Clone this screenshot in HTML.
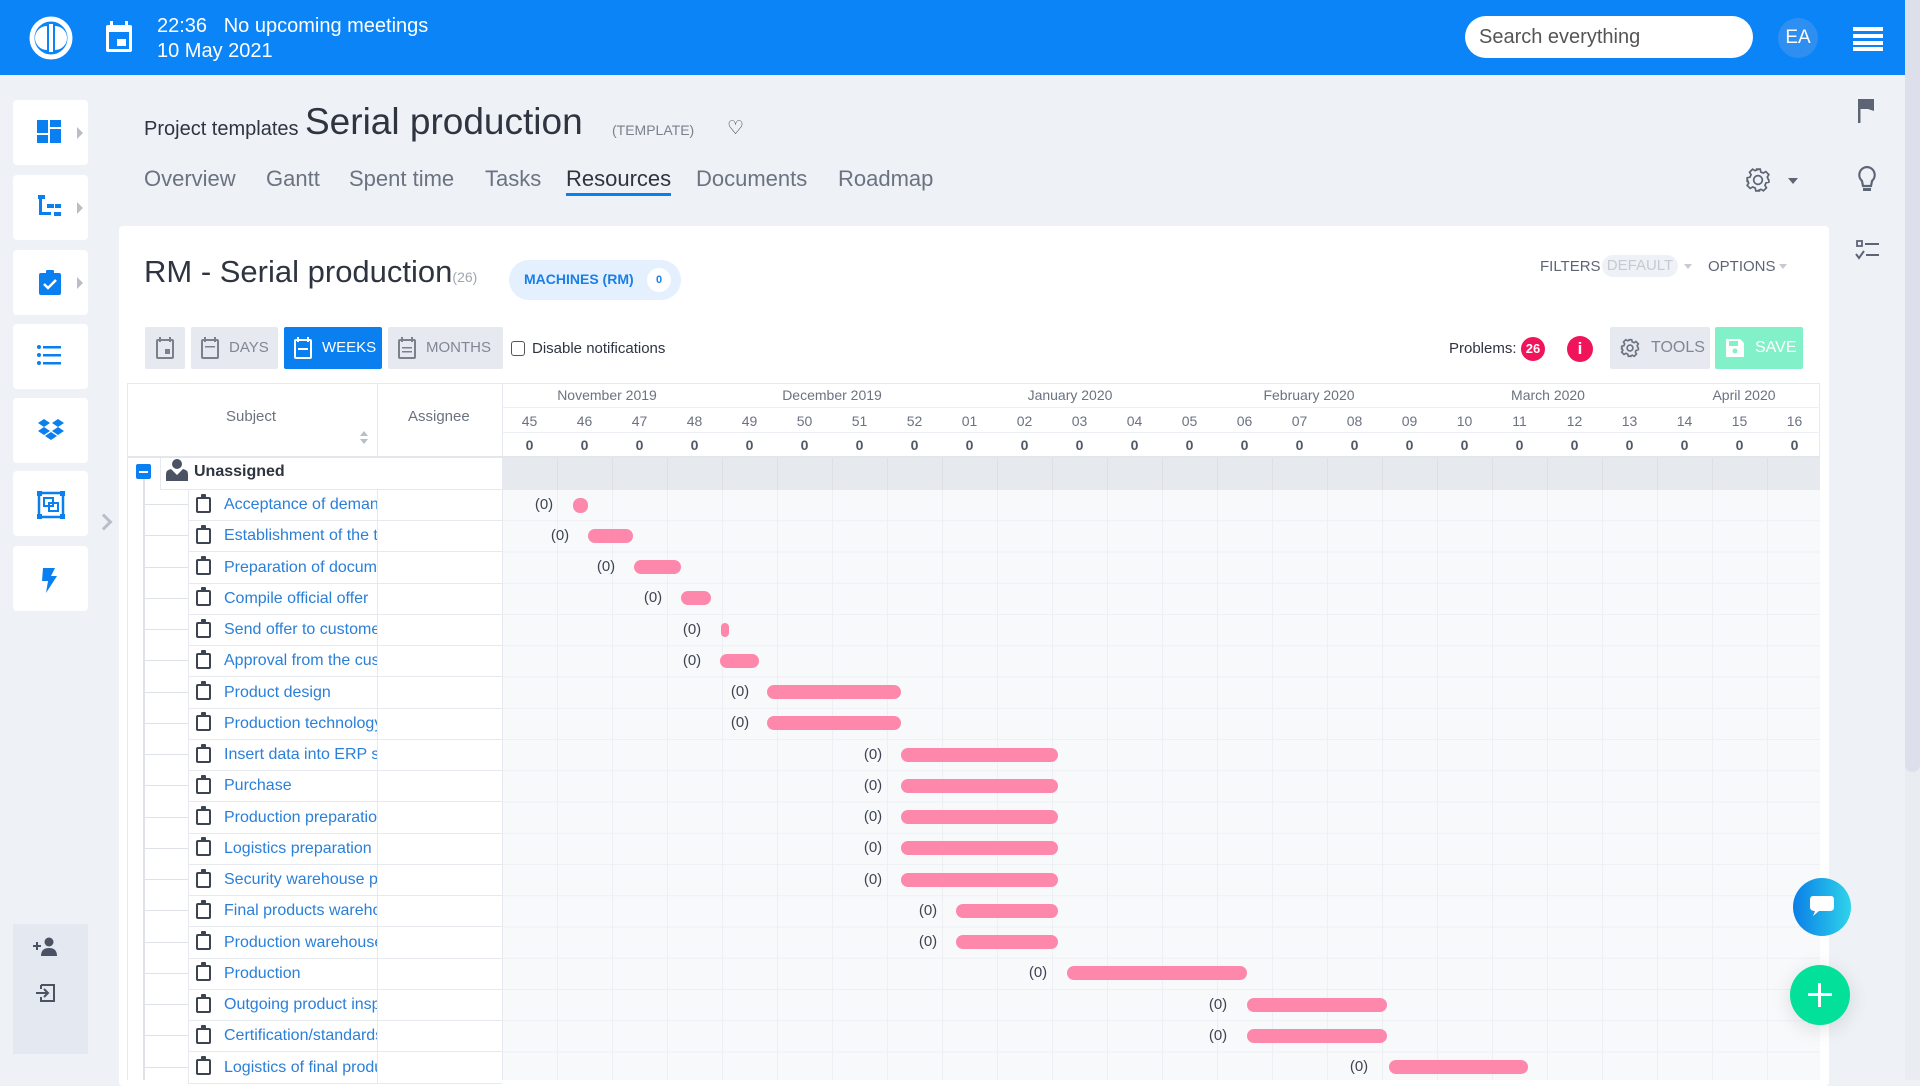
<!DOCTYPE html>
<html><head><meta charset="utf-8"><style>
*{box-sizing:border-box;margin:0;padding:0}
body{width:1920px;height:1080px;overflow:hidden;background:#eef2f6;font-family:"Liberation Sans",sans-serif;position:relative;color:#3d4451}
.a{position:absolute}
.hdr{left:0;top:0;width:1905px;height:75px;background:#0a84f7}
.tile{left:13px;width:75px;height:65px;background:#fff;border-radius:4px}
.tile svg{position:absolute;left:24px;top:20px}
.car{position:absolute;left:64px;top:27px;width:0;height:0;border-top:6px solid transparent;border-bottom:6px solid transparent;border-left:6px solid #b9bec8}
.tab{top:166px;font-size:22px;color:#6b7280}
.btn{top:327px;height:42px;background:#e6e9f0;color:#808794;font-size:15px;line-height:42px;border-radius:2px}
.row{left:127px;width:1693px;height:31px}
.tt{left:224px;font-size:16px;color:#2a7fd8;white-space:nowrap;overflow:hidden;width:153px;line-height:31px}
.ic{left:196px;width:15px;height:16px;border:2px solid #3d4451;border-radius:2px}
.ic:after{content:"";position:absolute;left:3px;top:-5px;width:5px;height:4px;background:#3d4451;border-radius:1px}
.bar{height:14px;background:#fd88ab;border-radius:7px}
.lb{font-size:15px;color:#3d4451;width:40px;text-align:center}
.wk{top:413px;width:55px;text-align:center;font-size:14px;color:#6b7280}
.z{top:437px;width:55px;text-align:center;font-size:14px;color:#505866;font-weight:bold}
.mo{top:387px;font-size:14px;color:#6b7280;text-align:center;width:160px}
</style></head><body>
<div class="a hdr"></div>
<svg class="a" style="left:28px;top:15px" width="46" height="46" viewBox="0 0 46 46"><circle cx="23" cy="23" r="19" fill="none" stroke="#fff" stroke-width="5"/><path d="M19 11 A12 12 0 0 0 19 35 Z" fill="#fff"/><rect x="21" y="9" width="4" height="28" fill="#fff"/><path d="M27 11 A12 12 0 0 1 27 35 Z" fill="#fff"/></svg>
<svg class="a" style="left:104px;top:20px" width="30" height="34" viewBox="0 0 30 34"><rect x="2" y="5" width="26" height="27" rx="2" fill="#fff"/><rect x="6" y="1" width="3" height="7" fill="#fff"/><rect x="21" y="1" width="3" height="7" fill="#fff"/><rect x="5" y="12" width="20" height="17" fill="#0a84f7"/><rect x="13" y="19" width="9" height="7" fill="#fff"/></svg>
<div class="a" style="left:157px;top:14px;color:#fff;font-size:20px;line-height:25px">22:36&nbsp;&nbsp; No upcoming meetings<br>10 May 2021</div>
<div class="a" style="left:1465px;top:16px;width:288px;height:42px;background:#fff;border-radius:21px;font-size:20px;color:#555;line-height:42px;padding-left:14px">Search everything</div>
<div class="a" style="left:1778px;top:18px;width:40px;height:40px;border-radius:50%;background:#2f8ff0;color:#fff;font-size:19px;line-height:40px;text-align:center">EA</div>
<div class="a" style="left:1853px;top:27px;width:30px;height:4px;background:#fff;box-shadow:0 7px 0 #fff,0 14px 0 #fff,0 20px 0 #fff"></div>
<div class="a" style="left:1905px;top:75px;width:15px;height:1005px;background:#e9edf2"></div>
<div class="a" style="left:1905px;top:0;width:15px;height:772px;background:#dde0ea;border-radius:0 0 7px 7px"></div>

<!-- left tiles -->
<div class="a tile" style="top:100px"><svg width="26" height="24"><rect x="0" y="0" width="11" height="13" fill="#0a7ff0"/><rect x="13" y="0" width="11" height="7" fill="#0a7ff0"/><rect x="0" y="15" width="11" height="8" fill="#0a7ff0"/><rect x="13" y="9" width="11" height="14" fill="#0a7ff0"/></svg><div class="car"></div></div>
<div class="a tile" style="top:175px"><svg width="26" height="24"><rect x="1" y="0" width="7" height="4" fill="#0a7ff0"/><rect x="2" y="4" width="3" height="16" fill="#0a7ff0"/><rect x="2" y="17" width="12" height="3" fill="#0a7ff0"/><rect x="10" y="9" width="7" height="4" fill="#0a7ff0"/><rect x="18" y="9" width="6" height="4" fill="#0a7ff0"/><rect x="17" y="17" width="7" height="4" fill="#0a7ff0"/></svg><div class="car"></div></div>
<div class="a tile" style="top:250px"><svg width="26" height="26"><rect x="2" y="3" width="22" height="22" rx="2" fill="#0a7ff0"/><rect x="9" y="0" width="8" height="5" rx="1" fill="#0a7ff0"/><path d="M7 14 L11 18 L19 10" stroke="#fff" stroke-width="2.5" fill="none"/></svg><div class="car"></div></div>
<div class="a tile" style="top:324px"><svg width="26" height="24"><circle cx="2" cy="3" r="2" fill="#0a7ff0"/><circle cx="2" cy="11" r="2" fill="#0a7ff0"/><circle cx="2" cy="19" r="2" fill="#0a7ff0"/><rect x="6" y="2" width="18" height="2.5" fill="#0a7ff0"/><rect x="6" y="10" width="18" height="2.5" fill="#0a7ff0"/><rect x="6" y="18" width="18" height="2.5" fill="#0a7ff0"/></svg></div>
<div class="a tile" style="top:398px"><svg width="28" height="24"><path d="M7 1 L13 5 L7 9 L1 5Z M21 1 L27 5 L21 9 L15 5Z M7 9 L13 13 L7 17 L1 13Z M21 9 L27 13 L21 17 L15 13Z M14 14 L20 18 L14 22 L8 18Z" fill="#0a7ff0"/></svg></div>
<div class="a tile" style="top:471px"><svg width="28" height="28"><rect x="2" y="2" width="24" height="24" fill="none" stroke="#0a7ff0" stroke-width="2.5"/><rect x="0" y="0" width="5" height="5" fill="#0a7ff0"/><rect x="23" y="0" width="5" height="5" fill="#0a7ff0"/><rect x="0" y="23" width="5" height="5" fill="#0a7ff0"/><rect x="23" y="23" width="5" height="5" fill="#0a7ff0"/><rect x="7" y="7" width="9" height="8" fill="none" stroke="#0a7ff0" stroke-width="2"/><rect x="12" y="12" width="9" height="8" fill="none" stroke="#0a7ff0" stroke-width="2"/></svg></div>
<div class="a tile" style="top:546px"><svg width="26" height="28"><path d="M6 2 L18 2 L14 10 L20 10 L9 27 L11 15 L5 15 Z" fill="#0a7ff0"/></svg></div>
<div class="a" style="left:98px;top:516px;width:12px;height:12px;border-right:3px solid #b9bec8;border-top:3px solid #b9bec8;transform:rotate(45deg)"></div>
<div class="a" style="left:13px;top:924px;width:75px;height:130px;background:#e4e8f0"></div>
<svg class="a" style="left:33px;top:937px" width="26" height="20"><rect x="0" y="8" width="8" height="2" fill="#4a5263"/><rect x="3" y="5" width="2" height="8" fill="#4a5263"/><circle cx="16" cy="5" r="4.5" fill="#4a5263"/><path d="M8 19 Q8 11 16 11 Q24 11 24 19Z" fill="#4a5263"/></svg>
<svg class="a" style="left:35px;top:983px" width="22" height="20"><path d="M6 2 H19 V18 H6 V14 M6 6 V2" stroke="#4a5263" stroke-width="2" fill="none"/><path d="M1 10 H13 M9 6 L13 10 L9 14" stroke="#4a5263" stroke-width="2" fill="none"/></svg>

<!-- right icons -->
<svg class="a" style="left:1857px;top:98px" width="20" height="26"><rect x="1" y="1" width="2.5" height="24" fill="#5d6575"/><path d="M3 1 H17 V13 L11 11 H3Z" fill="#5d6575"/></svg>
<svg class="a" style="left:1857px;top:165px" width="20" height="30"><path d="M10 2 A8 8 0 0 1 15 16 L14 21 H6 L5 16 A8 8 0 0 1 10 2Z" fill="none" stroke="#5d6575" stroke-width="2.2"/><rect x="6" y="23" width="8" height="3" fill="#5d6575"/></svg>
<svg class="a" style="left:1855px;top:240px" width="26" height="22"><rect x="2" y="1" width="5" height="5" fill="none" stroke="#5d6575" stroke-width="1.8"/><rect x="10" y="3" width="14" height="2" fill="#5d6575"/><path d="M1 14 L4 18 L9 11" stroke="#5d6575" stroke-width="2" fill="none"/><rect x="11" y="14" width="13" height="2" fill="#5d6575"/></svg>

<!-- page title -->
<div class="a" style="left:144px;top:118px;font-size:20px;color:#2e3440">Project templates</div>
<div class="a" style="left:305px;top:101px;font-size:37px;color:#2e3440">Serial production</div>
<div class="a" style="left:612px;top:122px;font-size:14px;color:#7a808c">(TEMPLATE)</div>
<div class="a" style="left:727px;top:117px;font-size:19px;color:#2e3440">♡</div>
<div class="a tab" style="left:144px">Overview</div>
<div class="a tab" style="left:266px">Gantt</div>
<div class="a tab" style="left:349px">Spent time</div>
<div class="a tab" style="left:485px">Tasks</div>
<div class="a tab" style="left:566px;color:#2e3440">Resources</div>
<div class="a" style="left:566px;top:193px;width:105px;height:3px;background:#0a7ff0"></div>
<div class="a tab" style="left:696px">Documents</div>
<div class="a tab" style="left:838px">Roadmap</div>
<svg class="a" style="left:1745px;top:167px" width="26" height="26" viewBox="0 0 24 24"><path d="M12 8a4 4 0 1 0 0 8a4 4 0 1 0 0-8z M10 2h4l.6 2.6 2.3 1 2.3-1.4 2.8 2.8-1.4 2.3 1 2.3L22 12v0l0 2-2.6.6-1 2.3 1.4 2.3-2.8 2.8-2.3-1.4-2.3 1L14 22h-4l-.6-2.6-2.3-1-2.3 1.4-2.8-2.8 1.4-2.3-1-2.3L2 14v-4l2.6-.6 1-2.3-1.4-2.3 2.8-2.8 2.3 1.4 2.3-1z" fill="none" stroke="#5d6575" stroke-width="1.6"/></svg>
<div class="a" style="left:1788px;top:178px;border-left:5px solid transparent;border-right:5px solid transparent;border-top:6px solid #5d6575"></div>

<!-- main panel -->
<div class="a" style="left:119px;top:226px;width:1710px;height:860px;background:#fff;border-radius:4px"></div>
<div class="a" style="left:144px;top:254px;font-size:31px;color:#2e3440">RM - Serial production<span style="font-size:14px;color:#a0a6b0">(26)</span></div>
<div class="a" style="left:509px;top:260px;width:172px;height:40px;border-radius:20px;background:#e4f0fd"></div>
<div class="a" style="left:524px;top:271px;font-size:14px;font-weight:bold;color:#1a7fe8">MACHINES (RM)</div>
<div class="a" style="left:647px;top:268px;width:24px;height:24px;border-radius:12px;background:#fff;font-size:11px;font-weight:bold;color:#1a7fe8;text-align:center;line-height:24px">0</div>
<div class="a" style="left:1540px;top:258px;font-size:15px;color:#5d6575">FILTERS</div>
<div class="a" style="left:1602px;top:255px;width:76px;height:22px;border-radius:11px;background:#eef2f6;font-size:15px;color:#c5cad3;text-align:center;line-height:22px">DEFAULT</div>
<div class="a" style="left:1684px;top:264px;border-left:4px solid transparent;border-right:4px solid transparent;border-top:5px solid #c5cad3"></div>
<div class="a" style="left:1708px;top:258px;font-size:15px;color:#5d6575">OPTIONS</div>
<div class="a" style="left:1779px;top:264px;border-left:4px solid transparent;border-right:4px solid transparent;border-top:5px solid #c5cad3"></div>

<div class="a btn" style="left:145px;width:40px"></div>
<svg class="a" style="left:156px;top:337px" width="18" height="22"><rect x="1" y="3" width="16" height="18" rx="1" fill="none" stroke="#7a808c" stroke-width="2"/><rect x="3" y="0" width="2" height="5" fill="#7a808c"/><rect x="13" y="0" width="2" height="5" fill="#7a808c"/><rect x="9" y="12" width="5" height="5" fill="#7a808c"/></svg>
<div class="a btn" style="left:191px;width:87px;padding-left:38px">DAYS</div>
<svg class="a" style="left:201px;top:337px" width="18" height="22"><rect x="1" y="3" width="16" height="18" rx="1" fill="none" stroke="#7a808c" stroke-width="2"/><rect x="3" y="0" width="2" height="5" fill="#7a808c"/><rect x="13" y="0" width="2" height="5" fill="#7a808c"/><rect x="4" y="9" width="10" height="1.5" fill="#7a808c"/></svg>
<div class="a btn" style="left:284px;width:98px;background:#0a7ff0;color:#fff;padding-left:38px">WEEKS</div>
<svg class="a" style="left:294px;top:337px" width="18" height="22"><rect x="1" y="3" width="16" height="18" rx="1" fill="none" stroke="#fff" stroke-width="2"/><rect x="3" y="0" width="2" height="5" fill="#fff"/><rect x="13" y="0" width="2" height="5" fill="#fff"/><rect x="4" y="11" width="10" height="2" fill="#fff"/></svg>
<div class="a btn" style="left:388px;width:115px;padding-left:38px">MONTHS</div>
<svg class="a" style="left:398px;top:337px" width="18" height="22"><rect x="1" y="3" width="16" height="18" rx="1" fill="none" stroke="#7a808c" stroke-width="2"/><rect x="3" y="0" width="2" height="5" fill="#7a808c"/><rect x="13" y="0" width="2" height="5" fill="#7a808c"/><rect x="4" y="10" width="10" height="1.5" fill="#7a808c"/><rect x="4" y="14" width="10" height="1.5" fill="#7a808c"/></svg>
<div class="a" style="left:511px;top:341px;width:14px;height:15px;border:1.5px solid #555;border-radius:3px"></div>
<div class="a" style="left:532px;top:340px;font-size:15px;color:#2e3440">Disable notifications</div>
<div class="a" style="left:1449px;top:340px;font-size:15px;color:#2e3440">Problems:</div>
<div class="a" style="left:1521px;top:337px;width:24px;height:24px;border-radius:12px;background:#f0145a;color:#fff;font-size:13px;font-weight:bold;text-align:center;line-height:24px">26</div>
<div class="a" style="left:1567px;top:336px;width:26px;height:26px;border-radius:13px;background:#f0145a;color:#fff;font-size:17px;font-weight:bold;text-align:center;line-height:26px">i</div>
<div class="a btn" style="left:1610px;width:100px;padding-left:41px;font-size:16px">TOOLS</div>
<svg class="a" style="left:1620px;top:338px" width="20" height="20" viewBox="0 0 24 24"><circle cx="12" cy="12" r="3.5" fill="none" stroke="#6b7280" stroke-width="2"/><path d="M10 2h4l.6 2.6 2.3 1 2.3-1.4 2.8 2.8-1.4 2.3 1 2.3L22 12l0 2-2.6.6-1 2.3 1.4 2.3-2.8 2.8-2.3-1.4-2.3 1L14 22h-4l-.6-2.6-2.3-1-2.3 1.4-2.8-2.8 1.4-2.3-1-2.3L2 14v-4l2.6-.6 1-2.3-1.4-2.3 2.8-2.8 2.3 1.4 2.3-1z" fill="none" stroke="#6b7280" stroke-width="2"/></svg>
<div class="a btn" style="left:1715px;width:88px;background:#82f0c9;color:#fff;padding-left:40px;font-size:16px">SAVE</div>
<svg class="a" style="left:1725px;top:338px" width="20" height="20"><path d="M1 1 H15 L19 5 V19 H1Z" fill="#fff"/><rect x="4" y="3" width="9" height="5" fill="#82f0c9"/><circle cx="10" cy="13" r="2.5" fill="#82f0c9"/></svg>

<!-- table -->
<div class="a" style="left:127px;top:383px;width:1693px;height:697px;border:1px solid #e6e9ee;border-bottom:none"></div>
<div class="a" style="left:502px;top:489px;width:1318px;height:591px;background-color:#f8f9fb;background-image:linear-gradient(90deg,#eceff3 1px,transparent 1px),linear-gradient(180deg,#eef0f4 1px,transparent 1px);background-size:55px 100%,100% 31.25px"></div>
<div class="a" style="left:502px;top:458px;width:1318px;height:32px;background-color:#e6e9ee;background-image:linear-gradient(90deg,#dde1e7 1px,transparent 1px);background-size:55px 100%"></div>
<div class="a" style="left:377px;top:383px;width:1px;height:75px;background:#e6e9ee"></div>
<div class="a" style="left:502px;top:383px;width:1px;height:697px;background:#e6e9ee"></div>
<div class="a" style="left:502px;top:407px;width:1318px;height:1px;background:#eceff3"></div>
<div class="a" style="left:502px;top:432px;width:1318px;height:1px;background:#eceff3"></div>
<div class="a" style="left:127px;top:456px;width:1693px;height:2px;background:#e3e6eb"></div>
<div class="a" style="left:226px;top:408px;font-size:15px;color:#6b7280">Subject</div>
<div class="a" style="left:408px;top:408px;font-size:15px;color:#6b7280">Assignee</div>
<div class="a" style="left:360px;top:431px;border-left:4px solid transparent;border-right:4px solid transparent;border-bottom:5px solid #b9bec8"></div>
<div class="a" style="left:360px;top:439px;border-left:4px solid transparent;border-right:4px solid transparent;border-top:5px solid #b9bec8"></div>

<div class="a mo" style="left:527px">November 2019</div>
<div class="a mo" style="left:752px">December 2019</div>
<div class="a mo" style="left:990px">January 2020</div>
<div class="a mo" style="left:1229px">February 2020</div>
<div class="a mo" style="left:1468px">March 2020</div>
<div class="a mo" style="left:1664px">April 2020</div>

<div class="a wk" style="left:502px">45</div><div class="a wk" style="left:557px">46</div><div class="a wk" style="left:612px">47</div><div class="a wk" style="left:667px">48</div><div class="a wk" style="left:722px">49</div><div class="a wk" style="left:777px">50</div><div class="a wk" style="left:832px">51</div><div class="a wk" style="left:887px">52</div><div class="a wk" style="left:942px">01</div><div class="a wk" style="left:997px">02</div><div class="a wk" style="left:1052px">03</div><div class="a wk" style="left:1107px">04</div><div class="a wk" style="left:1162px">05</div><div class="a wk" style="left:1217px">06</div><div class="a wk" style="left:1272px">07</div><div class="a wk" style="left:1327px">08</div><div class="a wk" style="left:1382px">09</div><div class="a wk" style="left:1437px">10</div><div class="a wk" style="left:1492px">11</div><div class="a wk" style="left:1547px">12</div><div class="a wk" style="left:1602px">13</div><div class="a wk" style="left:1657px">14</div><div class="a wk" style="left:1712px">15</div><div class="a wk" style="left:1767px">16</div>
<div class="a z" style="left:502px">0</div><div class="a z" style="left:557px">0</div><div class="a z" style="left:612px">0</div><div class="a z" style="left:667px">0</div><div class="a z" style="left:722px">0</div><div class="a z" style="left:777px">0</div><div class="a z" style="left:832px">0</div><div class="a z" style="left:887px">0</div><div class="a z" style="left:942px">0</div><div class="a z" style="left:997px">0</div><div class="a z" style="left:1052px">0</div><div class="a z" style="left:1107px">0</div><div class="a z" style="left:1162px">0</div><div class="a z" style="left:1217px">0</div><div class="a z" style="left:1272px">0</div><div class="a z" style="left:1327px">0</div><div class="a z" style="left:1382px">0</div><div class="a z" style="left:1437px">0</div><div class="a z" style="left:1492px">0</div><div class="a z" style="left:1547px">0</div><div class="a z" style="left:1602px">0</div><div class="a z" style="left:1657px">0</div><div class="a z" style="left:1712px">0</div><div class="a z" style="left:1767px">0</div>

<!-- unassigned -->
<div class="a" style="left:136px;top:464px;width:15px;height:15px;background:#0a7ff0;border-radius:2px"></div>
<div class="a" style="left:139px;top:471px;width:9px;height:2px;background:#fff"></div>
<div class="a" style="left:143px;top:479px;width:2px;height:601px;background:#dfe2e7"></div>
<div class="a" style="left:160px;top:458px;width:342px;height:32px;border-left:1px solid #e6e9ee;border-bottom:1px solid #e6e9ee"></div>
<svg class="a" style="left:166px;top:459px" width="22" height="22"><circle cx="11" cy="5" r="5" fill="#4a5263"/><path d="M0 22 L0 15 Q0 11 5 10 L11 16 L17 10 Q22 11 22 15 L22 22Z" fill="#4a5263"/></svg>
<div class="a" style="left:194px;top:463px;font-size:16px;font-weight:bold;color:#2e3440">Unassigned</div>

<div id="rows"></div>
<script>
var names=["Acceptance of demand","Establishment of the team","Preparation of documents","Compile official offer","Send offer to customer","Approval from the customer","Product design","Production technology","Insert data into ERP system","Purchase","Production preparation","Logistics preparation","Security warehouse parts","Final products warehouse","Production warehouse","Production","Outgoing product inspection","Certification/standards","Logistics of final products"];
var bars=[[573,588,544],[588,633,560],[634,681,606],[681,711,653],[721,729,692],[720,759,692],[767,901,740],[767,901,740],[901,1058,873],[901,1058,873],[901,1058,873],[901,1058,873],[901,1058,873],[956,1058,928],[956,1058,928],[1067,1247,1038],[1247,1387,1218],[1247,1387,1218],[1389,1528,1359]];
var h="";
for(var i=0;i<19;i++){var t=489+i*31.25;var c=t+15.6;
h+='<div class="a" style="left:143px;top:'+(t+15)+'px;width:45px;height:1px;background:#dfe2e7"></div>';
h+='<div class="a" style="left:188px;top:'+(t+31)+'px;width:314px;height:1px;background:#e6e9ee"></div>';
h+='<div class="a" style="left:188px;top:'+t+'px;width:1px;height:32px;background:#e6e9ee"></div>';
h+='<div class="a" style="left:377px;top:'+t+'px;width:1px;height:32px;background:#e6e9ee"></div>';
h+='<div class="a ic" style="top:'+(c-8)+'px"></div>';
h+='<div class="a tt" style="top:'+t+'px">'+names[i]+'</div>';
var b=bars[i],w=b[1]-b[0];
h+='<div class="a bar" style="left:'+b[0]+'px;top:'+(c-7)+'px;width:'+w+'px;'+(i==0?'height:15px;':'')+'"></div>';
h+='<div class="a lb" style="left:'+(b[2]-20)+'px;top:'+(c-9)+'px">(0)</div>';}
document.getElementById("rows").innerHTML=h;
</script>

<div class="a" style="left:1793px;top:878px;width:58px;height:58px;border-radius:50%;background:linear-gradient(90deg,#0a7fe8,#2fd3ea)"></div>
<svg class="a" style="left:1808px;top:894px" width="28" height="26"><path d="M5 2 H23 Q26 2 26 6 V13 Q26 17 22 17 H11 L5 22 L7 17 Q2 17 2 13 V6 Q2 2 5 2Z" fill="#fff"/></svg>
<div class="a" style="left:1790px;top:965px;width:60px;height:60px;border-radius:50%;background:#02e09a;box-shadow:0 4px 20px rgba(0,0,0,.12)"></div>
<div class="a" style="left:1808px;top:993px;width:24px;height:3px;background:#fff"></div>
<div class="a" style="left:1818px;top:983px;width:3px;height:24px;background:#fff"></div>
</body></html>
